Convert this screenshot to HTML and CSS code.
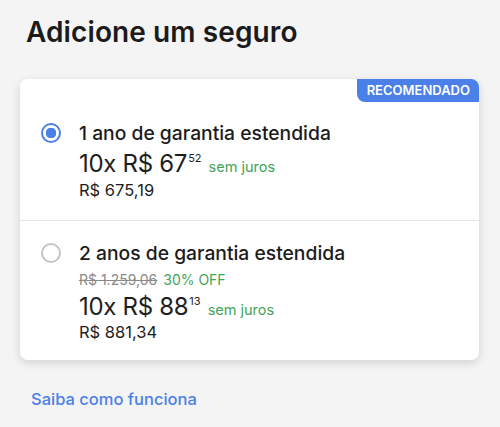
FILE: index.html
```html
<!DOCTYPE html>
<html lang="pt-BR">
<head>
<meta charset="utf-8">
<link rel="stylesheet" href="styles.css">
</head>
<body>
<div class="page">
  <h1 class="title">Adicione um seguro</h1>
  <div class="card">
    <span class="badge">RECOMENDADO</span>
    <div class="option">
      <span class="radio radio-on"></span>
      <div class="info">
        <div class="name">1 ano de garantia estendida</div>
        <div class="inst"><span class="big">10x R$ 67</span><span class="cents">52</span><span class="free">sem juros</span></div>
        <div class="total total-first">R$ 675,19</div>
      </div>
    </div>
    <div class="option option-last">
      <span class="radio"></span>
      <div class="info">
        <div class="name">2 anos de garantia estendida</div>
        <div class="old"><s class="strike">R$ 1.259,06</s><span class="off">30% OFF</span></div>
        <div class="inst inst-second"><span class="big">10x R$ 88</span><span class="cents">13</span><span class="free">sem juros</span></div>
        <div class="total">R$ 881,34</div>
      </div>
    </div>
  </div>
  <a class="link" href="#">Saiba como funciona</a>
</div>
</body>
</html>
```
FILE: styles.css
```css
* { box-sizing: border-box; }
html, body { margin: 0; padding: 0; }
body {
  background: #f4f4f4;
  font-family: Inter, "Liberation Sans", sans-serif;
  color: #1e1e1e;
  width: 500px;
  height: 427px;
  overflow: hidden;
}
.page { padding: 12px 20px 0 20px; }
.title {
  margin: 0 0 0 6px;
  font-size: 28px;
  font-weight: 600;
  line-height: 40px;
  letter-spacing: 0.1px;
  color: #1b1b1b;
}
.card {
  position: relative;
  margin-top: 27px;
  background: #fff;
  border-radius: 8px;
  box-shadow: 0 3px 10px rgba(0,0,0,0.14);
  width: 459px;
}
.badge {
  position: absolute;
  top: 0;
  right: 0;
  background: #4a80e8;
  color: #fff;
  font-size: 13px;
  font-weight: 600;
  line-height: 23px;
  padding: 0 9px 0 10px;
  border-radius: 0 8px 0 8px;
}
.option {
  display: flex;
  align-items: flex-start;
  padding: 42px 20px 20px 21px;
  border-bottom: 1px solid #e8e8e8;
}
.option-last { border-bottom: 0; padding-top: 20px; padding-bottom: 18px; }
.radio {
  flex: none;
  width: 20px;
  height: 20px;
  border-radius: 50%;
  border: 2px solid #c4c4c4;
  margin-top: 2px;
  margin-right: 18px;
}
.radio-on {
  border: 2.5px solid #4a80e8;
  background: radial-gradient(circle, #4a80e8 0 5px, #fff 5.5px);
}
.name {
  font-size: 19.3px;
  font-weight: 500;
  line-height: 24px;
  color: #1b1b1b;
}
.inst {
  margin-top: 4px;
  font-size: 24px;
  line-height: 30px;
  height: 30px;
}
.inst-second { margin-top: 3px; }
.big { font-weight: 400; letter-spacing: -0.3px; }
.cents { font-size: 11px; line-height: 1; vertical-align: 10px; margin-left: 1px; }
.free { font-size: 14.5px; line-height: 1; color: #3fa35a; margin-left: 7px; }
.total { font-size: 16.5px; line-height: 20px; }
.total-first { margin-top: 1px; }
.old { font-size: 14px; line-height: 18px; margin-top: 6px; }
.strike { color: #8a8a8a; }
.off { color: #3fa35a; margin-left: 6px; }
.link {
  display: block;
  margin: 29px 0 0 11px;
  color: #4a80e8;
  font-size: 16.5px;
  font-weight: 500;
  line-height: 20px;
  text-decoration: none;
}
```
